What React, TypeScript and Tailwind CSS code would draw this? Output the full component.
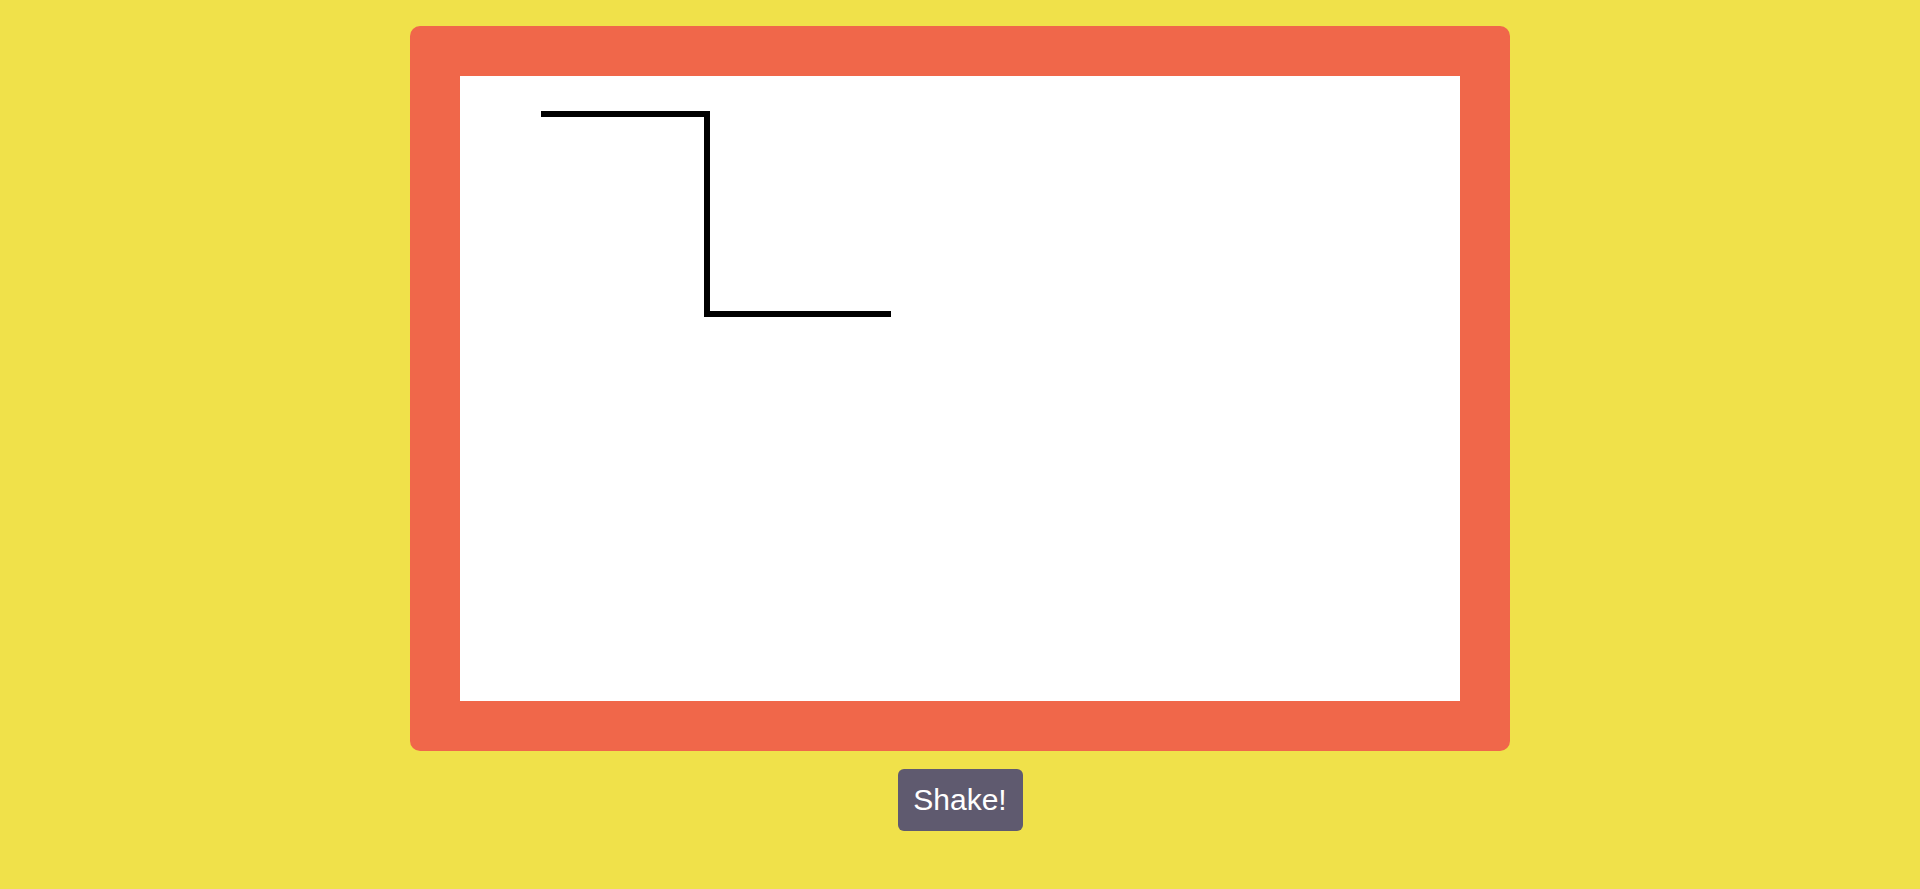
const App = () => {
    return (
        <main className="min-h-screen w-full bg-[#f0e14a] flex flex-col items-center pt-[26px] font-['Liberation_Sans',Arial,sans-serif]">
            <section className="w-[1100px] h-[725px] bg-[#f0674a] rounded-[10px] p-[50px]">
                <div className="w-full h-full bg-white">
                    <svg width="1000" height="625" viewBox="0 0 1000 625" className="block">
                        <polyline
                            points="81,38 247,38 247,238 431,238"
                            fill="none"
                            stroke="#000"
                            strokeWidth={6}
                            strokeLinejoin="miter"
                        />
                    </svg>
                </div>
            </section>

            <button
                type="button"
                className="mt-[18px] w-[125px] h-[62px] rounded-[6px] bg-[#5f5a6f] text-white text-[30px] leading-none flex items-center justify-center cursor-pointer"
            >
                Shake!
            </button>
        </main>
    );
};

export default App;
